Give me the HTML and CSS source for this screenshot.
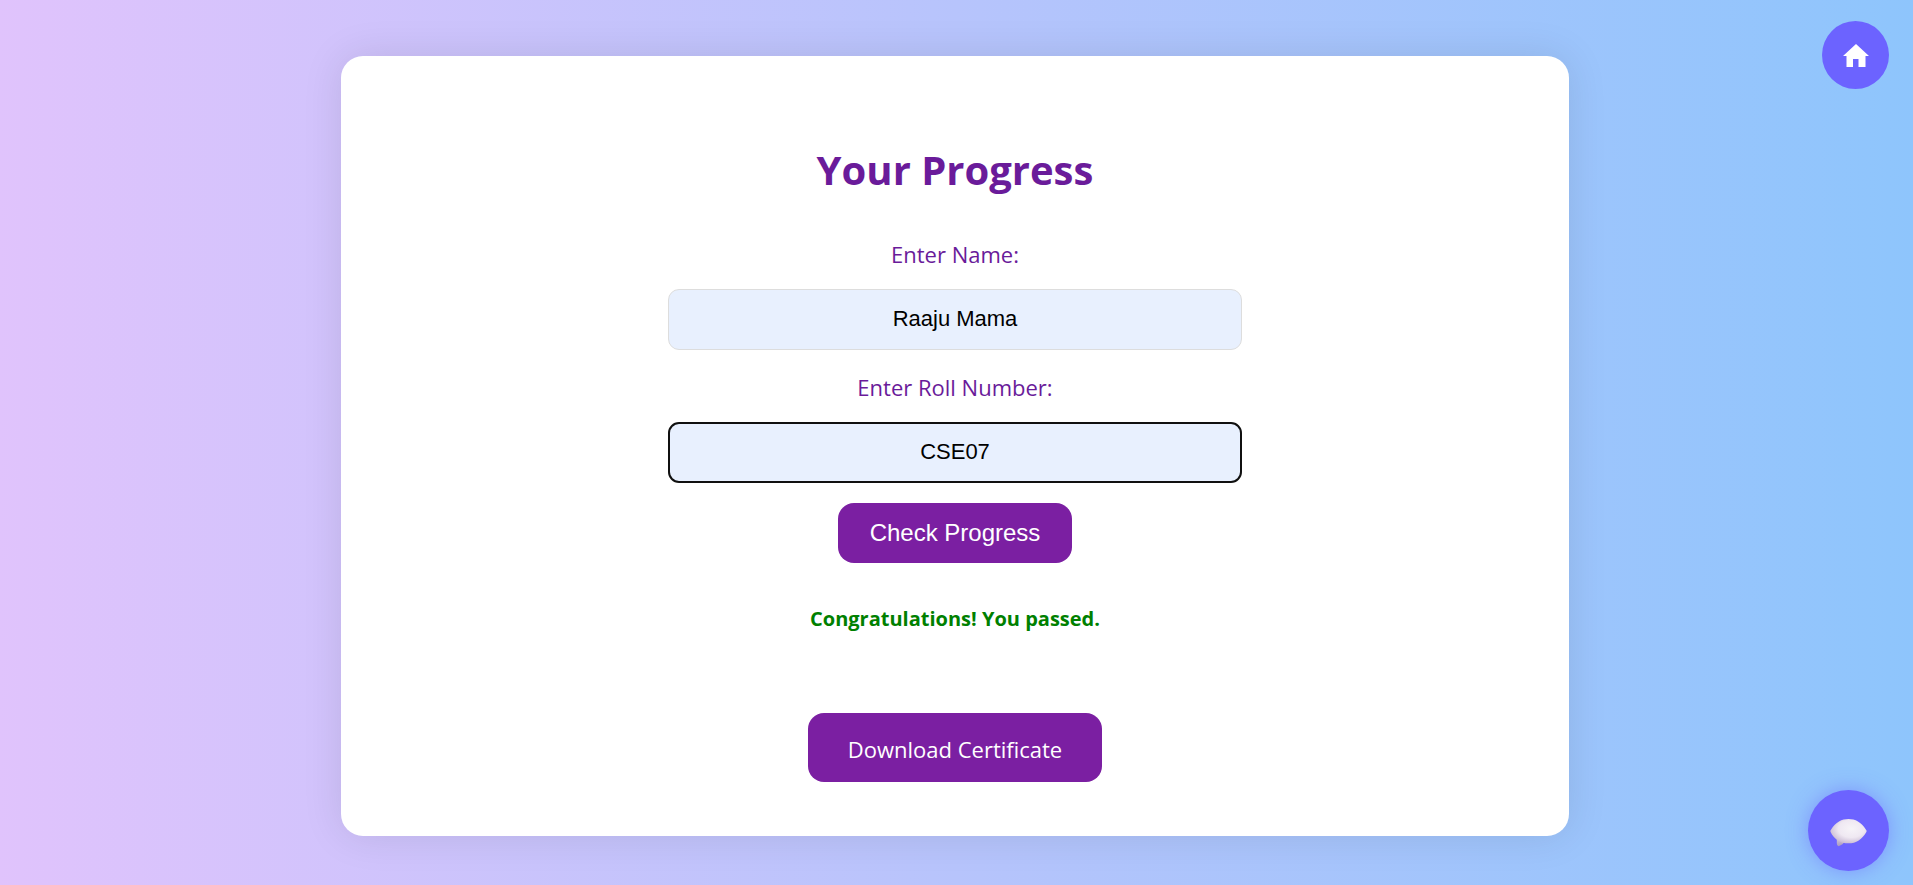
FILE: index.html
```html
<!DOCTYPE html>
<html lang="en">
<head>
  <meta charset="utf-8">
  <meta name="viewport" content="width=device-width, initial-scale=1">
  <title>Your Progress</title>
  <link rel="stylesheet" href="styles.css">
</head>
<body>
  <a class="home-link" href="#" aria-label="Home">
    <svg class="home-icon" viewBox="0 0 26 23" aria-hidden="true"><path fill="#fff" d="M13 0 0 12h3.500v11H10v-8h5.500v8h7V12H26z"/></svg>
  </a>
  <main class="card">
    <h1 class="title">Your Progress</h1>
    <form class="form">
      <label class="label" for="name">Enter Name:</label>
      <input class="field" id="name" type="text" value="Raaju Mama">
      <label class="label" for="roll">Enter Roll Number:</label>
      <input class="field field-active" id="roll" type="text" value="CSE07">
      <button class="button check" type="button">Check Progress</button>
    </form>
    <p class="result">Congratulations! You passed.</p>
    <a class="button download" href="#">Download Certificate</a>
  </main>
  <button class="chat-button" type="button" aria-label="Open chat">
    <svg class="chat-icon" viewBox="0 0 38 30" aria-hidden="true">
      <defs>
        <radialGradient id="bubble" cx=".58" cy=".4" r=".6">
          <stop offset="0" stop-color="#f7f4f8"/>
          <stop offset=".6" stop-color="#efe8f2"/>
          <stop offset="1" stop-color="#cdbfd6"/>
        </radialGradient>
        <linearGradient id="tail" x1="0" y1="0" x2="0" y2="1">
          <stop offset="0" stop-color="#d5c9de"/>
          <stop offset="1" stop-color="#a99bc0"/>
        </linearGradient>
      </defs>
      <path fill="url(#tail)" d="M7 20v6q0 4 3 2.500 4-1.500 5-4.500z"/>
      <path fill="url(#bubble)" d="M.5 14Q0 13 1 12C6 4 12 1 19 1s13 3 18 11q1 1 .5 2C33 22 27 26 19 26S4 22 .5 14z"/>
    </svg>
  </button>
</body>
</html>
```
FILE: styles.css
```css
* {
  box-sizing: border-box;
}

body {
  margin: 0;
  min-height: 100vh;
  padding: 56px 3px 48px 0;
  background: linear-gradient(to right, #e0c3fc, #8ec5fc);
  font-family: "Segoe UI", "Open Sans", "Noto Sans", sans-serif;
  color: #6a1b9a;
}

.card {
  width: 90%;
  max-width: 1228px;
  margin: 0 auto;
  padding: 84px 54px 54px;
  display: flex;
  flex-direction: column;
  align-items: center;
  background: #fff;
  border-radius: 22px;
  box-shadow: 0 0 40px rgba(0, 0, 0, 0.1);
  text-align: center;
}

.title {
  margin: 0 0 28px;
  font-size: 40px;
  line-height: 60px;
  font-weight: 700;
}

.form {
  width: 100%;
  max-width: 574px;
  display: flex;
  flex-direction: column;
  align-items: center;
}

.label {
  margin-bottom: 9px;
  font-size: 22px;
  line-height: 52px;
}

.field {
  width: 100%;
  height: 61px;
  margin-bottom: 11px;
  padding: 0 16px 2px;
  border: 1px solid #ddd;
  border-radius: 11px;
  background: #e8f0fe;
  font-family: Arial, "Liberation Sans", sans-serif;
  font-size: 22px;
  color: #000;
  text-align: center;
}

.field-active {
  margin-bottom: 20px;
  border: 2px solid #101010;
}

.button {
  border: 0;
  border-radius: 16px;
  background: #7b1fa2;
  color: #fff;
  font-size: 24px;
  text-decoration: none;
  cursor: pointer;
}

.check {
  padding: 16px 32px;
  font-family: Arial, "Liberation Sans", sans-serif;
  line-height: 28px;
}

.result {
  margin: 40px 0 78px;
  font-size: 20px;
  line-height: 32px;
  font-weight: 700;
  color: #008000;
}

.download {
  padding: 20px 40px 16px;
  font-size: 22px;
  line-height: 33px;
}

.home-link,
.chat-button {
  position: fixed;
  right: 24px;
  display: flex;
  align-items: center;
  justify-content: center;
  border-radius: 50%;
  background: #6c63ff;
}

.home-link {
  top: 21px;
  width: 67px;
  height: 68px;
}

.home-icon {
  width: 26px;
}

.chat-button {
  bottom: 14px;
  width: 81px;
  height: 81px;
  padding: 4px 0 0;
  border: 0;
  box-shadow: 0 0 20px rgba(108, 99, 255, 0.5);
  cursor: pointer;
}

.chat-icon {
  width: 37px;
}
```
